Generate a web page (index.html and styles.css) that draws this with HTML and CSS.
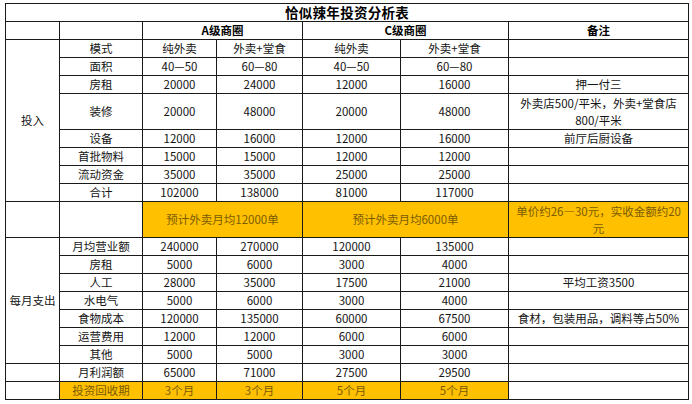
FILE: index.html
```html
<!DOCTYPE html>
<html lang="zh">
<head>
<meta charset="utf-8">
<title>恰似辣年投资分析表</title>
<link rel="stylesheet" href="styles.css">
</head>
<body>
<table class="sheet">
  <colgroup>
    <col class="c1"><col class="c2"><col class="c3"><col class="c4"><col class="c5"><col class="c6"><col class="c7">
  </colgroup>
  <tbody>
    <tr class="r"><td colspan="7" class="title">恰似辣年投资分析表</td></tr>
    <tr class="r">
      <td></td><td></td>
      <td colspan="2" class="head">A级商圈</td>
      <td colspan="2" class="head">C级商圈</td>
      <td class="head">备注</td>
    </tr>
    <tr class="r">
      <td rowspan="8" class="cat">投入</td>
      <td>模式</td><td>纯外卖</td><td class="g">外卖+堂食</td><td>纯外卖</td><td>外卖+堂食</td><td></td>
    </tr>
    <tr class="r"><td>面积</td><td>40—50</td><td class="g">60—80</td><td>40—50</td><td>60—80</td><td></td></tr>
    <tr class="r"><td>房租</td><td>20000</td><td class="g">24000</td><td>12000</td><td>16000</td><td>押一付三</td></tr>
    <tr class="r2"><td>装修</td><td>20000</td><td class="g">48000</td><td>20000</td><td>48000</td><td>外卖店500/平米，外卖+堂食店<br>800/平米</td></tr>
    <tr class="r"><td>设备</td><td>12000</td><td class="g">16000</td><td>12000</td><td>16000</td><td>前厅后厨设备</td></tr>
    <tr class="r"><td>首批物料</td><td>15000</td><td class="g">15000</td><td>12000</td><td>12000</td><td></td></tr>
    <tr class="r"><td>流动资金</td><td>35000</td><td class="g">35000</td><td>25000</td><td>25000</td><td></td></tr>
    <tr class="r"><td>合计</td><td>102000</td><td class="g">138000</td><td>81000</td><td>117000</td><td></td></tr>
    <tr class="r2">
      <td></td><td></td>
      <td colspan="2" class="hl">预计外卖月均12000单</td>
      <td colspan="2" class="hl">预计外卖月均6000单</td>
      <td class="hl">单价约26—30元，实收金额约20<br>元</td>
    </tr>
    <tr class="rb">
      <td rowspan="7" class="cat">每月支出</td>
      <td>月均营业额</td><td>240000</td><td class="g">270000</td><td>120000</td><td>135000</td><td></td>
    </tr>
    <tr class="rb"><td>房租</td><td>5000</td><td class="g">6000</td><td>3000</td><td>4000</td><td></td></tr>
    <tr class="rb"><td>人工</td><td>28000</td><td class="g">35000</td><td>17500</td><td>21000</td><td>平均工资3500</td></tr>
    <tr class="rb"><td>水电气</td><td>5000</td><td class="g">6000</td><td>3000</td><td>4000</td><td></td></tr>
    <tr class="rb"><td>食物成本</td><td>120000</td><td class="g">135000</td><td>60000</td><td>67500</td><td>食材，包装用品，调料等占50%</td></tr>
    <tr class="rb"><td>运营费用</td><td>12000</td><td class="g">12000</td><td>6000</td><td>6000</td><td></td></tr>
    <tr class="rb"><td>其他</td><td>5000</td><td class="g">5000</td><td>3000</td><td>3000</td><td></td></tr>
    <tr class="rb"><td class="lt"></td><td>月利润额</td><td>65000</td><td class="g">71000</td><td>27500</td><td>29500</td><td></td></tr>
    <tr class="rb">
      <td class="lt"></td>
      <td class="hl">投资回收期</td><td class="hl">3个月</td><td class="hl g">3个月</td><td class="hl">5个月</td><td class="hl">5个月</td><td></td>
    </tr>
  </tbody>
</table>
</body>
</html>
```
FILE: styles.css
```css
html, body {
  margin: 0;
  padding: 0;
  background: #ffffff;
}

body {
  font-family: "Noto Sans CJK SC", "Noto Sans", sans-serif;
  font-size: 11.5px;
  color: #141414;
}

.sheet {
  margin: 3px 0 0 5px;
  border-collapse: collapse;
  table-layout: fixed;
  width: 683px;
}

.c1 { width: 54px; }
.c2 { width: 83px; }
.c3 { width: 74px; }
.c4 { width: 86px; }
.c5 { width: 98px; }
.c6 { width: 108px; }
.c7 { width: 180px; }

.sheet td {
  border: 1px solid #1a1a1a;
  padding: 0;
  text-align: center;
  vertical-align: middle;
  line-height: 17px;
  white-space: nowrap;
  overflow: hidden;
}

.r td { height: 17px; }
.r2 td { height: 35px; }
.rb td { height: 16.8px; }
.r2 td[rowspan], .r td[rowspan], .rb td[rowspan] { height: auto; }

.sheet td.g {
  border-left: 1px solid #8a8a8a;
}

.title {
  font-size: 13.5px;
  font-weight: 700;
  color: #000;
  letter-spacing: 0.3px;
}

.head {
  font-weight: 700;
  color: #000;
}

.cat {
  padding-top: 4px;
}

.hl {
  background: #ffc000;
  color: #7a5c00;
}

.sheet td.lt {
  border-top-color: #9a9a9a;
}
```
